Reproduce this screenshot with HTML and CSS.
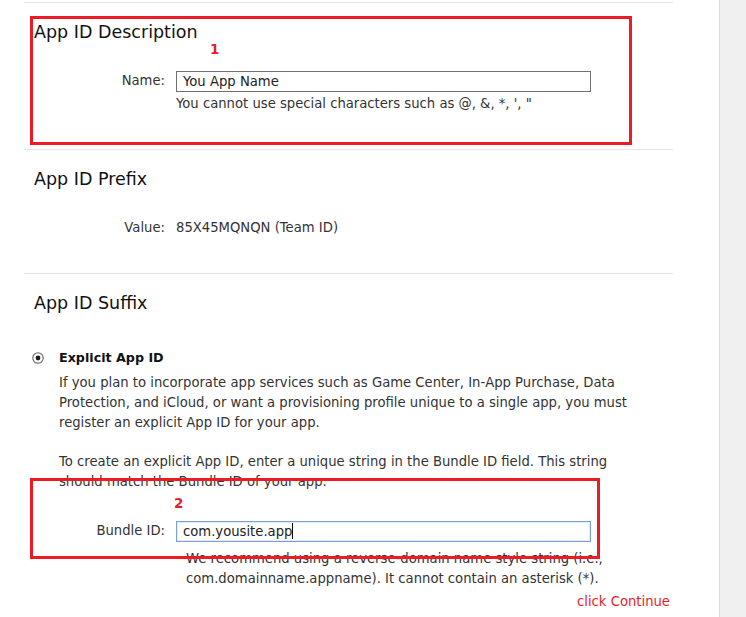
FILE: index.html
```html
<!DOCTYPE html>
<html lang="en">
<head>
<meta charset="utf-8">
<title>Register App ID</title>
<link rel="stylesheet" href="styles.css">
</head>
<body>
<div class="page">
  <main class="main">
    <section class="sec sec-desc">
      <h2 class="sec-title">App ID Description</h2>
      <div class="row">
        <span class="label">Name:</span>
        <div class="field">
          <div class="textbox">You App Name</div>
          <p class="hint">You cannot use special characters such as @, &amp;, *, ', "</p>
        </div>
      </div>
    </section>

    <section class="sec sec-prefix">
      <h2 class="sec-title">App ID Prefix</h2>
      <div class="row">
        <span class="label">Value:</span>
        <span class="value">85X45MQNQN (Team ID)</span>
      </div>
    </section>

    <section class="sec sec-suffix">
      <h2 class="sec-title">App ID Suffix</h2>
      <div class="option">
        <div class="option-head">
          <svg class="radio" width="12" height="12" viewBox="0 0 12 12" aria-hidden="true">
            <circle cx="6" cy="6" r="5.2" fill="#fff" stroke="#7a7a7a" stroke-width="1.3"/>
            <circle cx="6" cy="6" r="2.4" fill="#1a1a1a"/>
          </svg>
          <span class="option-title">Explicit App ID</span>
        </div>
        <div class="option-body">
          <p class="para">If you plan to incorporate app services such as Game Center, In&#8209;App Purchase, Data Protection, and iCloud, or want a provisioning profile unique to a single app, you must register an explicit App ID for your app.</p>
          <p class="para para-gap">To create an explicit App ID, enter a unique string in the Bundle ID field. This string should match the Bundle ID of your app.</p>
        </div>
        <div class="row row-bundle">
          <span class="label">Bundle ID:</span>
          <div class="field">
            <div class="textbox textbox-focus">com.yousite.app<span class="caret"></span></div>
            <p class="hint hint-indent">We recommend using a reverse-domain name style string (i.e., com.domainname.appname). It cannot contain an asterisk (*).</p>
          </div>
        </div>
      </div>
      <p class="note">click Continue</p>
    </section>

    <div class="mark mark-1"></div>
    <span class="mark-num num-1">1</span>
    <div class="mark mark-2"></div>
    <span class="mark-num num-2">2</span>
  </main>
  <aside class="side"></aside>
</div>
</body>
</html>
```

FILE: styles.css
```css
html, body {
  margin: 0;
  padding: 0;
  background: #fff;
}

body {
  font-family: "DejaVu Sans", "Liberation Sans", sans-serif;
  font-size: 13.2px;
  line-height: 20px;
  color: #333;
}

.page {
  display: flex;
  min-height: 100vh;
}

.main {
  position: relative;
  flex: none;
  width: 719px;
  padding: 2px 46px 0 24px;
  box-sizing: border-box;
}

.side {
  flex: 1;
  background: #f0f0f0;
  border-left: 1px solid #dadada;
}

.sec {
  border-top: 1px solid #e4e4e6;
  padding-top: 18px;
}

.sec-desc { padding-bottom: 35px; }
.sec-prefix { padding-bottom: 35px; }

.sec-title {
  margin: 0 0 28px;
  padding-left: 10px;
  font-size: 17.5px;
  line-height: 22px;
  font-weight: normal;
  color: #111;
}

.row {
  display: grid;
  grid-template-columns: 141px auto;
  column-gap: 11px;
  align-items: start;
}

.sec-desc .row { margin-top: 1px; }

.label {
  text-align: right;
  color: #333;
}

.value { color: #333; }

.field {
  display: flex;
  flex-direction: column;
}

.textbox {
  box-sizing: border-box;
  width: 415px;
  height: 21px;
  border: 1px solid #707070;
  padding: 0 6px;
  line-height: 19px;
  color: #222;
  background: #fff;
  white-space: nowrap;
}

.textbox-focus {
  border-color: #7b9fd9;
  box-shadow: inset 0 0 0 1px #e3ecfa;
}

.caret {
  display: inline-block;
  width: 1px;
  height: 16px;
  background: #000;
  vertical-align: -3px;
}

.hint {
  margin: 2px 0 0;
  color: #333;
}

.hint-indent {
  margin-top: 7px;
  padding-left: 10px;
  max-width: 470px;
}

.sec-suffix .sec-title { margin-bottom: 34px; }

.option-head {
  display: flex;
  align-items: center;
  gap: 15px;
  padding-left: 8px;
  height: 20px;
}

.radio { display: block; flex: none; }

.option-title {
  font-weight: bold;
  font-size: 12.7px;
  color: #111;
}

.option-body {
  padding-left: 35px;
  padding-right: 29px;
  margin-top: 5px;
}

.para {
  margin: 0;
  color: #333;
}

.para-gap { margin-top: 19px; }

.row-bundle { margin-top: 29px; }

.note {
  margin: 3px 0 0;
  padding-right: 3px;
  text-align: right;
  color: #ed1c24;
  font-size: 13.2px;
}

.mark {
  position: absolute;
  box-sizing: border-box;
  border: 3px solid #ed1c24;
}

.mark-1 {
  left: 30px;
  top: 16px;
  width: 602px;
  height: 129px;
}

.mark-2 {
  left: 30px;
  top: 478px;
  width: 570px;
  height: 81px;
}

.mark-num {
  position: absolute;
  color: #ed1c24;
  font-weight: bold;
  font-size: 13.5px;
  line-height: 13px;
}

.num-1 { left: 210px; top: 43px; }
.num-2 { left: 174px; top: 497px; }
```
